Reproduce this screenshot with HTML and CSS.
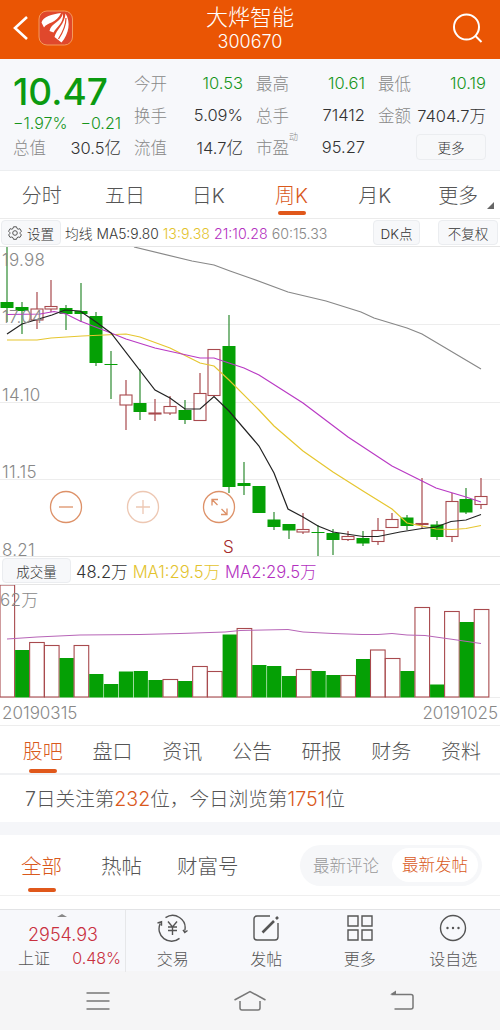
FILE: index.html
```
<!DOCTYPE html>
<html lang="zh-CN">
<head>
    <meta charset="UTF-8">
    <meta name="viewport" content="width=device-width, initial-scale=1.0">
    <title>大烨智能 300670</title>
    <link rel="stylesheet" href="styles.css">
</head>
<body>
    <header class="header">
        <div class="header-left">
            <svg class="back" width="16" height="26" viewBox="0 0 16 26"><path d="M14 2 L2 13 L14 24"/></svg>
            <svg class="logo" width="36" height="36" viewBox="0 0 36 36">
                <rect class="logo-bg" x="1" y="1" width="33.500" height="34" rx="8"/>
                <path d="M23 3C14 4 5 7 3.500 12.500L6 17.500C9 12.500 19 13 23 3z"/>
                <path d="M25 3.500C23 12 13 13 11.500 21L15.500 22.500C19 16 26 13 25 3.500z"/>
                <path d="M27.500 3.500C27 14 18 20 16.500 27L23.500 32.500C31 24 33 12 27.500 3.500z"/>
                <path class="logo-cut" d="M28 8C28 16 25 22 20.500 29"/>
            </svg>
        </div>
        <div class="header-title">
            <h1>大烨智能</h1>
            <p>300670</p>
        </div>
        <svg class="search" width="32" height="32" viewBox="0 0 32 32"><circle cx="14.500" cy="14" r="12.500"/><path d="M23 22.500 L29.500 29"/></svg>
    </header>

    <section class="quote">
        <div class="quote-col">
            <div class="price">10.47</div>
            <div class="row change green"><span>−1.97%</span><span>−0.21</span></div>
            <div class="row"><label>总值</label><span>30.5亿</span></div>
        </div>
        <div class="quote-col">
            <div class="row"><label>今开</label><span class="green">10.53</span></div>
            <div class="row"><label>换手</label><span>5.09%</span></div>
            <div class="row"><label>流值</label><span>14.7亿</span></div>
        </div>
        <div class="quote-col">
            <div class="row"><label>最高</label><span class="green">10.61</span></div>
            <div class="row"><label>总手</label><span>71412</span></div>
            <div class="row"><label>市盈<sup>动</sup></label><span>95.27</span></div>
        </div>
        <div class="quote-col">
            <div class="row"><label>最低</label><span class="green">10.19</span></div>
            <div class="row"><label>金额</label><span>7404.7万</span></div>
            <div class="row row-end"><button class="more-btn">更多</button></div>
        </div>
    </section>

    <nav class="period-tabs">
        <a>分时</a>
        <a>五日</a>
        <a>日K</a>
        <a class="active">周K</a>
        <a>月K</a>
        <a class="has-menu">更多</a>
    </nav>

    <div class="ma-bar">
        <button class="chip chip-set">
            <svg width="14" height="14" viewBox="0 0 14 14"><path d="M5.500 .8h3l.5 1.700 1.200.7 1.700-.5 1.500 2.600-1.200 1.200v1.200l1.200 1.200-1.500 2.500-1.700-.4-1.200.7-.5 1.600h-3L5 11.700 3.800 11l-1.700.4L.6 8.900l1.200-1.200V6.500L.6 5.300l1.500-2.600 1.700.5L5 2.500z"/><circle cx="7" cy="7" r="2.300"/></svg>设置
        </button>
        <p class="ma-values"><span>均线 MA5:9.80</span><span class="yellow">13:9.38</span><span class="purple">21:10.28</span><span class="grey">60:15.33</span></p>
        <button class="chip chip-dk">DK点</button>
        <button class="chip chip-fq">不复权</button>
    </div>

    <div class="chart kline">
        <svg id="kline" width="500" height="309" viewBox="0 247 500 309"></svg>
        <span class="axis axis-1">19.98</span>
        <span class="axis axis-2">17.04</span>
        <span class="axis axis-3">14.10</span>
        <span class="axis axis-4">11.15</span>
        <span class="axis axis-5">8.21</span>
        <span class="sell">S</span>
        <div class="zoom-btns">
            <svg width="34" height="34" viewBox="0 0 34 34"><circle cx="17" cy="17" r="15.500"/><path d="M10 17h14"/></svg>
            <svg class="disabled" width="34" height="34" viewBox="0 0 34 34"><circle cx="17" cy="17" r="15.500"/><path d="M10 17h14M17 10v14"/></svg>
            <svg width="34" height="34" viewBox="0 0 34 34"><circle cx="17" cy="17" r="15.500"/><path d="M10 15.500V9.500h6M10 9.500l5.500 5.500M25 18.500v6h-6M25 24.500L19.500 19"/></svg>
        </div>
    </div>

    <div class="vol-bar">
        <button class="chip chip-vol">成交量</button>
        <span>48.2万</span><span class="yellow">MA1:29.5万</span><span class="purple">MA2:29.5万</span>
    </div>

    <div class="chart volume">
        <svg id="volume" width="500" height="113" viewBox="0 585 500 113"></svg>
        <span class="axis axis-vol">62万</span>
    </div>
    <div class="dates"><span>20190315</span><span>20191025</span></div>

    <nav class="info-tabs">
        <a class="active">股吧</a>
        <a>盘口</a>
        <a>资讯</a>
        <a>公告</a>
        <a>研报</a>
        <a>财务</a>
        <a>资料</a>
    </nav>

    <p class="rank">7日关注第<b>232</b>位，今日浏览第<b>1751</b>位</p>

    <div class="posts">
        <a class="active">全部</a>
        <a>热帖</a>
        <a>财富号</a>
        <div class="switch"><span>最新评论</span><span class="on">最新发帖</span></div>
    </div>

    <footer class="toolbar">
        <div class="index">
            <i class="caret"></i>
            <div class="index-value">2954.93</div>
            <div class="index-row"><span>上证</span><span class="red">0.48%</span></div>
        </div>
        <div class="tool">
            <svg width="32" height="30" viewBox="0 0 32 30"><path d="M8.500 4.600A12.500 12.500 0 0 1 27.800 17.500M22.500 25.400A12.500 12.500 0 0 1 3.200 10.500M.5 10l4-1.200v4M26 16.800l1.800 2.700 2.700-2M11 8.500l4.500 5.500L20 8.500M15.500 14v8M11 14h9M11 17.500h9"/></svg>
            交易
        </div>
        <div class="tool">
            <svg width="32" height="30" viewBox="0 0 32 30"><path d="M20 3H7a3 3 0 0 0-3 3v18a3 3 0 0 0 3 3h18a3 3 0 0 0 3-3V10"/><path class="thick" d="M12.500 19.500L24 8M26 6l2-2"/></svg>
            发帖
        </div>
        <div class="tool">
            <svg width="32" height="30" viewBox="0 0 32 30"><path d="M4 3h10v10H4zM18 3h10v10H18zM4 17h10v10H4zM18 17h10v10H18z"/></svg>
            更多
        </div>
        <div class="tool">
            <svg width="32" height="30" viewBox="0 0 32 30"><circle cx="16" cy="15" r="12.500"/><path class="dots" d="M10.500 15h0M16 15h0M21.500 15h0"/></svg>
            设自选
        </div>
    </footer>

    <div class="sysnav">
        <svg width="34" height="24" viewBox="0 0 34 24"><path d="M5.500 3h23M5.500 11h23M5.500 19h23"/></svg>
        <svg width="34" height="24" viewBox="0 0 34 24"><path d="M1.500 10L17 1.500 32.500 10M7 11v7q0 2 2 2h16q2 0 2-2v-7"/></svg>
        <svg width="34" height="24" viewBox="0 0 34 24"><path d="M6.500 4.500H26q2 0 2 2v10.500q0 2-2 2H9.500"/><path class="fill" d="M5 4.500l6-4v4z"/></svg>
    </div>

    <script>
        const STEP = 14.82;

        // [up/down, high, low, top, bottom]
        const candles = [
            ['g', 247, 322, 302, 308], ['g', 302, 334, 307, 311], ['r', 292, 329, 309, 320], ['r', 280, 312, 306.5, 309],
            ['g', 305, 330, 308, 314], ['g', 283, 322, 311, 314], ['g', 312, 366, 316, 363], ['g', 351, 399, 364, 365],
            ['r', 380, 430, 395, 405], ['g', 369, 420, 403, 412], ['r', 399, 421, 413, 414], ['r', 396, 415, 406.5, 413],
            ['g', 400, 424, 410, 420], ['r', 373, 420, 393.5, 420.5], ['r', 349, 396, 349.5, 395.5], ['g', 315, 493, 346, 487],
            ['g', 462, 495, 483, 486], ['g', 486, 512, 486, 513], ['g', 512, 530, 519.5, 527], ['g', 524, 539, 524, 530.5],
            ['r', 513, 534, 529.5, 532], ['g', 525, 557, 532, 533], ['g', 529, 555, 533, 540], ['r', 531, 541, 536.5, 539.5],
            ['g', 531, 546, 538, 543.5], ['r', 518, 545, 530.5, 541.5], ['r', 513, 528, 519.5, 527.5], ['g', 515, 530, 517.5, 526],
            ['r', 478, 528, 523.5, 524.5], ['g', 521, 540, 524.5, 537], ['r', 493, 542, 501.5, 536.5], ['g', 488, 514, 499, 512.5],
            ['r', 478, 509, 496.5, 504.5]
        ];

        const volumes = [
            ['r', 585], ['g', 650], ['r', 642.5], ['r', 645.5], ['g', 658], ['r', 645.5], ['g', 674], ['g', 684], ['g', 671.5],
            ['g', 671], ['g', 680], ['r', 679.5], ['g', 681], ['r', 666.5], ['r', 671.5], ['g', 634.5], ['r', 628.5], ['g', 665],
            ['g', 666], ['g', 676], ['r', 669.5], ['g', 671], ['g', 675], ['r', 675.5], ['g', 659], ['r', 650], ['r', 658.5],
            ['g', 671], ['r', 607.5], ['g', 684.5], ['r', 611.5], ['g', 622], ['r', 609.5]
        ];

        const line = (cls, points) => `<polyline class="line ${cls}" points="${points}"/>`;

        let k = '<path class="gridline" d="M0 324.5H500M0 402.5H500M0 479.500H500"/>';
        candles.forEach(([c, high, low, top, bottom], i) => {
            const x = Math.round(7 + i * STEP);
            if (c === 'g') {
                k += `<path class="wick-g" d="M${x} ${high}V${low}"/>`;
                k += `<rect class="body-g" x="${x - 6.5}" y="${top}" width="13" height="${bottom - top}"/>`;
            } else {
                k += `<path class="wick-r" d="M${x} ${high}V${top}M${x} ${bottom}V${low}"/>`;
                k += `<rect class="body-r" x="${x - 6}" y="${top}" width="12" height="${bottom - top}"/>`;
            }
        });
        k += line('l60', '134,247 192,261 214,265 230,271 250,278 288,292 326,301 361,312 374,318 407,328 422,334 481,369');
        k += line('l13', '7,340 37,340 51,338 82,336 126,334 140,337 170,348 200,363 214,366 229,380 259,410 274,426 303,451 333,472 363,491 392,509 407,523 422,526 436,529 452,529.5 466,528.5 481,525.5');
        k += line('l21', '7,314.5 40,314 54,311.500 66,314 80,321 111,333 126,339 155,348 200,358 214,358 229,363 244,368 259,375 303,403 348,437 392,466 422,481 436,488 466,497 481,502');
        k += line('l5', '7,334 22,324 52,315 65,310 80,311 96,322 111,333 155,390 170,398 185,409 200,409 214,396.5 229,411 259,446 274,473 288,509 303,517 318,526 333,532 363,536.5 378,536.5 400,532 422,528.5 436,527 451,521.5 466,520 481,514.5');
        document.getElementById('kline').innerHTML = k;

        let v = '<path class="gridline" d="M0 697.500H500"/>';
        volumes.forEach(([c, top], i) => {
            const x = i * STEP;
            v += c === 'g'
                ? `<rect class="body-g" x="${x + 0.3}" y="${top}" width="${STEP - 0.6}" height="${697.5 - top}"/>`
                : `<rect class="body-r" x="${x}" y="${top}" width="${STEP - 0.2}" height="${697 - top}"/>`;
        });
        v += line('lvol', '7,639 37,637 80,635 140,634.5 180,633.5 225,632 240,630.5 288,629.5 303,632 333,633.5 362,634.5 378,634.5 392,633.5 407,635 425,635.5 450,639 481,643.5');
        document.getElementById('volume').innerHTML = v;
    </script>
</body>
</html>
```
FILE: styles.css
```
* {
    box-sizing: border-box;
}

body {
    margin: 0;
    width: 500px;
    height: 1030px;
    overflow: hidden;
    background: #fff;
    font-family: Inter, "Noto Sans CJK SC", sans-serif;
    font-weight: 300;
    color: #333;
    white-space: nowrap;
}

h1, p {
    margin: 0;
}

button {
    font: inherit;
    color: inherit;
    padding: 0;
    border: 1px solid #ebedf0;
    border-radius: 4px;
    background: #f7f8fa;
}

svg {
    display: block;
    fill: none;
}

.green { color: #16951b; }
.red { color: #c9303e; }
.yellow { color: #e3c32d; }
.purple { color: #b32fc0; }
.grey { color: #888; }

/* header */
.header {
    display: flex;
    justify-content: space-between;
    height: 59px;
    background: #ea5504;
    color: #fff;
}

.header-left {
    display: flex;
    width: 200px;
    padding: 10px 0 0 13px;
    gap: 9px;
}

.back {
    margin-top: 5px;
    stroke: #fff;
    stroke-width: 2.6;
}

.logo {
    fill: #fff;
}

.logo-bg {
    fill: #e0482c;
    stroke: #f59a5c;
}

.logo-cut {
    fill: none;
    stroke: #e0482c;
    stroke-width: 1.2;
}

.header-title {
    text-align: center;
}

.header-title h1 {
    margin-top: 3px;
    font-size: 22px;
    font-weight: 300;
    line-height: 28px;
}

.header-title p {
    font-size: 18px;
    line-height: 22px;
}

.search {
    margin: 13px 16px 0 152px;
    stroke: #fff;
    stroke-width: 2;
}

/* quote */
.quote {
    display: grid;
    grid-template-columns: 108px 109px 109px 108px;
    column-gap: 13px;
    height: 112px;
    padding: 8px 0 0 13px;
    background: #f7f8fb;
    border-bottom: 1px solid #eceef0;
}

.row {
    display: flex;
    justify-content: space-between;
    align-items: center;
    height: 32px;
    font-size: 16.5px;
}

.row label {
    color: #888;
}

.row sup {
    position: absolute;
    margin-top: -5px;
    font-size: 9px;
}

.row-end {
    justify-content: flex-end;
}

.price {
    height: 48px;
    font-size: 37px;
    font-weight: 500;
    line-height: 49px;
    color: #0b9a10;
}

.row.change {
    height: 16px;
    font-size: 16px;
}

.more-btn {
    width: 70px;
    height: 26px;
    font-size: 13.5px;
}

/* period tabs */
.period-tabs {
    display: grid;
    grid-template-columns: repeat(6, 83.3px);
    height: 47px;
    line-height: 50px;
    font-size: 20px;
    text-align: center;
    color: #555;
}

.active {
    position: relative;
    color: #d9591c;
}

.active::after {
    content: "";
    position: absolute;
    left: 50%;
    bottom: 4px;
    width: 28px;
    height: 4px;
    margin-left: -14px;
    border-radius: 2px;
    background: #e0581b;
}

.period-tabs .active::after {
    bottom: 6px;
}

.has-menu {
    position: relative;
}

.has-menu::after {
    content: "";
    position: absolute;
    right: 6px;
    bottom: 12px;
    border-left: 7px solid transparent;
    border-bottom: 7px solid #666;
}

/* moving averages */
.ma-bar {
    display: flex;
    align-items: center;
    height: 29px;
    border-top: 1px solid #ebebeb;
    border-bottom: 1px solid #e6e6e6;
    font-size: 13.5px;
}

.chip {
    height: 25px;
    flex: none;
    font-size: 13.5px;
}

.chip-set {
    display: flex;
    align-items: center;
    justify-content: center;
    gap: 5px;
    width: 60px;
    margin: 0 4px 0 1px;
}

.chip-set svg {
    stroke: #555;
}

.ma-values {
    display: flex;
    align-items: baseline;
    gap: 4px;
    width: 308px;
    font-size: 14.2px;
}

.ma-values span:first-child {
    font-size: 13.8px;
}

.chip-dk {
    width: 47px;
    margin-right: 18px;
}

.chip-fq {
    width: 60px;
}

/* charts */
.chart {
    position: relative;
}

.axis {
    position: absolute;
    left: 2px;
    font-size: 17px;
    letter-spacing: .25px;
    line-height: 20px;
    color: #888;
}

.axis-1 { top: 3px; }
.axis-2 { top: 60px; }
.axis-3 { top: 138px; }
.axis-4 { top: 215px; }
.axis-5 { top: 293px; }
.axis-vol { top: 5px; left: 0; }

.sell {
    position: absolute;
    left: 223px;
    top: 290px;
    font-size: 17px;
    line-height: 20px;
    color: #a52a2a;
}

.zoom-btns {
    position: absolute;
    left: 49px;
    top: 243px;
    display: flex;
    gap: 42.5px;
}

.zoom-btns svg {
    stroke: #dd9168;
    stroke-width: 1.3;
}

.zoom-btns .disabled {
    opacity: .5;
}

.gridline { stroke: #ededed; }
.wick-g { stroke: #2c8a30; stroke-width: 1.2; }
.wick-r { stroke: #a84a4e; stroke-width: 1.2; }
.body-g { fill: #05a005; }
.body-r { fill: #fff; stroke: #a84a4e; stroke-width: 1.1; }

.line { stroke-width: 1.2; }
.l60 { stroke: #888; }
.l13 { stroke: #e6c62f; }
.l21 { stroke: #b93ac4; }
.l5 { stroke: #222; }
.lvol { stroke: #b765b7; stroke-width: 1; }

.vol-bar {
    display: flex;
    align-items: center;
    gap: 5px;
    height: 29px;
    border-top: 1px solid #e6e6e6;
    border-bottom: 1px solid #e6e6e6;
    font-size: 16.6px;
}

.chip-vol {
    width: 69px;
    margin-left: 2px;
}

.dates {
    display: flex;
    justify-content: space-between;
    height: 28px;
    padding: 0 2px;
    border-bottom: 1px solid #ededed;
    font-size: 17px;
    line-height: 31px;
    color: #888;
}

/* info tabs */
.info-tabs {
    display: grid;
    grid-template-columns: repeat(7, 69.7px);
    height: 49px;
    padding-left: 8px;
    border-bottom: 2px solid #f0f1f3;
    line-height: 52px;
    font-size: 20px;
    text-align: center;
    color: #555;
}

.info-tabs .active::after {
    bottom: 5px;
}

.rank {
    height: 60px;
    padding-left: 25px;
    border-bottom: 13px solid #f5f6f9;
    font-size: 19.6px;
    line-height: 48px;
    color: #555;
}

.rank b {
    font-weight: 300;
    color: #d9591c;
}

.posts {
    display: flex;
    align-items: center;
    height: 61px;
    padding: 0 7px 0 21px;
    border-bottom: 1px solid #efefef;
    font-size: 20.5px;
    color: #555;
}

.posts a {
    height: 60px;
    margin-right: 39px;
    line-height: 64px;
}

.posts a:nth-child(2) {
    margin-right: 35px;
}

.posts a.active::after {
    bottom: 3px;
}

.posts a:nth-child(3) {
    margin-right: 0;
}

.switch {
    display: flex;
    align-items: center;
    width: 182px;
    height: 41px;
    margin-left: auto;
    margin-right: 11px;
    padding: 0 4px 0 13px;
    border-radius: 21px;
    background: #f6f7f9;
    font-size: 16.5px;
    color: #999;
}

.switch .on {
    width: 86px;
    height: 34px;
    margin-left: auto;
    border-radius: 17px;
    background: #fff;
    text-align: center;
    line-height: 35px;
    color: #d9591c;
}

/* bottom toolbar */
.toolbar {
    display: grid;
    grid-template-columns: 126px repeat(4, 93.500px);
    height: 62px;
    margin-top: 13px;
    border-top: 1px solid #e2e3e5;
    background: #f7f8fb;
}

.index {
    border-right: 1px solid #e6e7e9;
    height: 62px;
}

.caret {
    display: block;
    width: 0;
    margin: 4px 0 0 57px;
    border: 5px solid transparent;
    border-top: 0;
    border-bottom: 3px solid #888;
}

.index-value {
    padding-left: 28px;
    font-size: 18px;
    line-height: 35px;
    color: #c9303e;
}

.index-row {
    display: flex;
    justify-content: space-between;
    padding: 0 4px 0 18px;
    font-size: 16px;
    line-height: 13px;
    color: #555;
}

.tool {
    display: flex;
    flex-direction: column;
    align-items: center;
    padding-top: 3px;
    font-size: 16px;
    line-height: 33px;
    color: #555;
}

.tool svg {
    flex: none;
    stroke: #555;
    stroke-width: 1.4;
}

.tool .thick {
    stroke-width: 2.6;
}

.tool .dots {
    stroke-width: 2.4;
    stroke-linecap: round;
}

.sysnav {
    display: flex;
    justify-content: space-between;
    height: 59px;
    padding: 19px 81px;
    background: #f5f5f6;
}

.sysnav svg {
    stroke: #777;
    stroke-width: 1.5;
}

.sysnav .fill {
    fill: #777;
    stroke: none;
}
```
